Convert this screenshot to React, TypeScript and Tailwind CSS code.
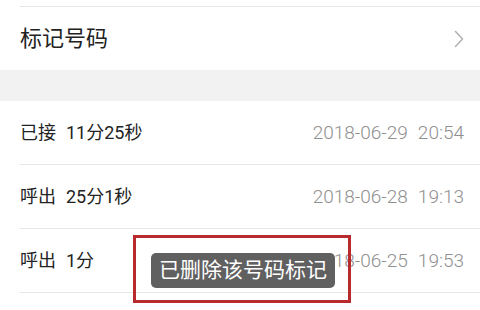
import React from 'react';

const calls = [
	{ label: '已接', dur: '11分25秒', date: '2018-06-29', time: '20:54' },
	{ label: '呼出', dur: '25分1秒', date: '2018-06-28', time: '19:13' },
	{ label: '呼出', dur: '1分', date: '2018-06-25', time: '19:53' },
];

function Chevron() {
	return (
		<svg width="10" height="18" viewBox="0 0 10 18" fill="none">
			<polyline points="1.5,1.5 8.5,9 1.5,16.5" stroke="#b3b3b3" strokeWidth="1.6" strokeLinecap="round" strokeLinejoin="round" />
		</svg>
	);
}

export default function App() {
	return (
		<div
			className="relative w-[480px] h-[310px] overflow-hidden bg-white text-[#222]"
			style={{ fontFamily: 'Roboto, "Noto Sans CJK SC", sans-serif' }}
		>
			<div className="h-[6px]" />
			<div className="ml-5 h-px bg-[#e6e6e6]" />
			<div className="flex h-[63px] items-center justify-between pl-5 pr-[16px]">
				<span className="text-[22px] leading-none">标记号码</span>
				<Chevron />
			</div>
			<div className="h-[31px] bg-[#f2f2f2]" />
			{calls.map((c, i) => (
				<div key={i}>
					<div className="flex h-[63px] items-center justify-between pl-5 pr-[16px]">
						<span className="text-[18px] leading-none">
							{c.label}
							<span className="ml-[10px]">{c.dur}</span>
						</span>
						<span className="text-[19px] font-light leading-none text-[#8f8f8f]">
							{c.date}
							<span className="ml-[10px]">{c.time}</span>
						</span>
					</div>
					<div className="ml-5 h-px bg-[#e6e6e6]" />
				</div>
			))}
			<div className="absolute left-[133px] top-[235px] h-[68px] w-[218px] border-[3px] border-[#b92a2f]" />
			<div className="absolute left-[151px] top-[253px] flex h-[35px] w-[184px] items-center justify-center rounded-[5px] bg-[#606060] text-[21px] leading-none text-white">
				已删除该号码标记
			</div>
		</div>
	);
}
